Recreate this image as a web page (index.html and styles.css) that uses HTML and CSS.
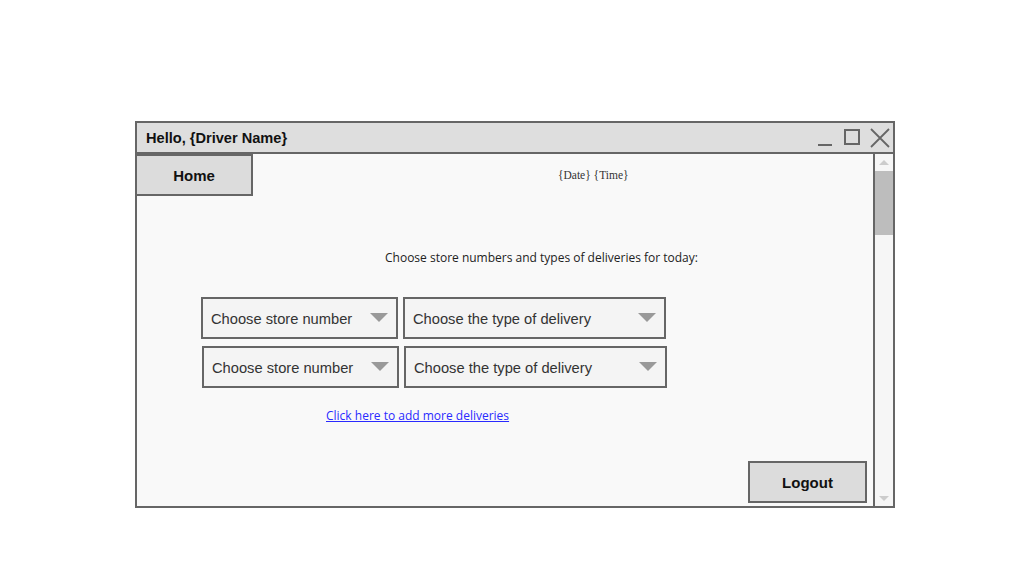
FILE: index.html
```html
<!DOCTYPE html>
<html>
<head>
<meta charset="utf-8">
<link rel="stylesheet" href="styles.css">
</head>
<body>
<div class="window">
  <div class="titlebar">
    <span class="title">Hello, {Driver Name}</span>
    <div class="controls">
      <svg class="ctl min" width="16" height="20" viewBox="0 0 16 20"><line x1="1" y1="17" x2="15" y2="17" stroke="#666" stroke-width="2"/></svg>
      <svg class="ctl max" width="16" height="20" viewBox="0 0 16 20"><rect x="1" y="2" width="14" height="14" fill="none" stroke="#666" stroke-width="2"/></svg>
      <svg class="ctl close" width="20" height="20" viewBox="0 0 20 20"><path d="M1 1 L19 19 M19 1 L1 19" stroke="#666" stroke-width="1.8" fill="none"/></svg>
    </div>
  </div>
  <div class="body">
    <div class="main">
      <div class="header">
        <div class="btn home">Home</div>
        <div class="datetime">{Date} {Time}</div>
      </div>
      <div class="instr">Choose store numbers and types of deliveries for today:</div>
      <div class="rows">
        <div class="row">
          <div class="select s1"><span>Choose store number</span><i class="tri"></i></div>
          <div class="select s2"><span>Choose the type of delivery</span><i class="tri"></i></div>
        </div>
        <div class="row row2">
          <div class="select s1"><span>Choose store number</span><i class="tri"></i></div>
          <div class="select s2"><span>Choose the type of delivery</span><i class="tri"></i></div>
        </div>
      </div>
      <a class="link" href="#">Click here to add more deliveries</a>
      <div class="btn logout">Logout</div>
    </div>
    <div class="scrollbar">
      <i class="up"></i>
      <div class="thumb"></div>
      <div class="track"></div>
      <i class="down"></i>
    </div>
  </div>
</div>
</body>
</html>
```
FILE: styles.css
```css
html, body { margin: 0; padding: 0; background: #fff; }
body { font-family: "Liberation Sans", Arial, sans-serif; }

.window {
  margin: 121px 0 0 135px;
  width: 760px;
  height: 387px;
  box-sizing: border-box;
  border: 2px solid #666;
  display: flex;
  flex-direction: column;
  background: #f9f9f9;
}
.titlebar {
  height: 29px;
  border-bottom: 2px solid #666;
  background: #dedede;
  display: flex;
  align-items: center;
  justify-content: space-between;
  padding-left: 9px;
  flex: none;
}
.title { font-weight: bold; font-size: 14.6px; color: #111; }
.controls { display: flex; align-items: center; padding-right: 3px; }
.ctl { display: block; }
.max { margin-left: 11px; }
.close { margin-left: 10px; }

.body { flex: 1; display: flex; min-height: 0; }
.main { flex: 1; display: flex; flex-direction: column; min-width: 0; }

.header { display: flex; align-items: center; height: 42px; }
.btn {
  box-sizing: border-box;
  background: #dcdcdc;
  border: 2px solid #666;
  display: flex;
  align-items: center;
  justify-content: center;
  font-weight: bold;
  font-size: 15px;
  color: #111;
}
.home { width: 118px; height: 42px; margin-left: -2px; }
.datetime {
  margin-left: 305px;
  font-family: "Liberation Serif", "Times New Roman", serif;
  font-size: 11.5px;
  color: #333;
}
.instr {
  margin-top: 54px;
  padding-left: 248px;
  font-family: "Open Sans", sans-serif;
  font-size: 12px;
  line-height: 16px;
  color: #222;
}
.rows { margin-top: 31px; padding-left: 64px; display: flex; flex-direction: column; gap: 7px; }
.row { display: flex; gap: 5px; }
.row2 { margin-left: 1px; }
.select {
  box-sizing: border-box;
  height: 42px;
  border: 2px solid #666;
  background: #f4f4f4;
  display: flex;
  align-items: center;
  justify-content: space-between;
  padding: 1px 8px 0 8px;
  font-size: 14.7px;
  color: #333;
}
.s1 { width: 197px; }
.s2 { width: 263px; }
.tri {
  width: 0; height: 0;
  border-left: 9px solid transparent;
  border-right: 9px solid transparent;
  border-top: 9px solid #999;
  margin-top: -3px;
}
.link {
  margin-top: 20px;
  margin-left: 189px;
  align-self: flex-start;
  font-family: "Open Sans", sans-serif;
  font-size: 12px;
  line-height: 16px;
  color: #2a2aff;
  text-decoration: underline;
}
.logout {
  margin-top: auto;
  margin-bottom: 3px;
  margin-right: 6px;
  align-self: flex-end;
  width: 119px;
  height: 42px;
}

.scrollbar {
  width: 18px;
  border-left: 2px solid #666;
  display: flex;
  flex-direction: column;
  align-items: center;
  background: #f6f6f6;
}
.up, .down {
  width: 0; height: 0;
  border-left: 5px solid transparent;
  border-right: 5px solid transparent;
}
.up { border-bottom: 5px solid #ccc; margin-top: 6px; }
.thumb { align-self: stretch; height: 64px; background: #bdbdbd; margin-top: 6px; }
.track { flex: 1; }
.down { border-top: 5px solid #ccc; margin-bottom: 5px; }
```
